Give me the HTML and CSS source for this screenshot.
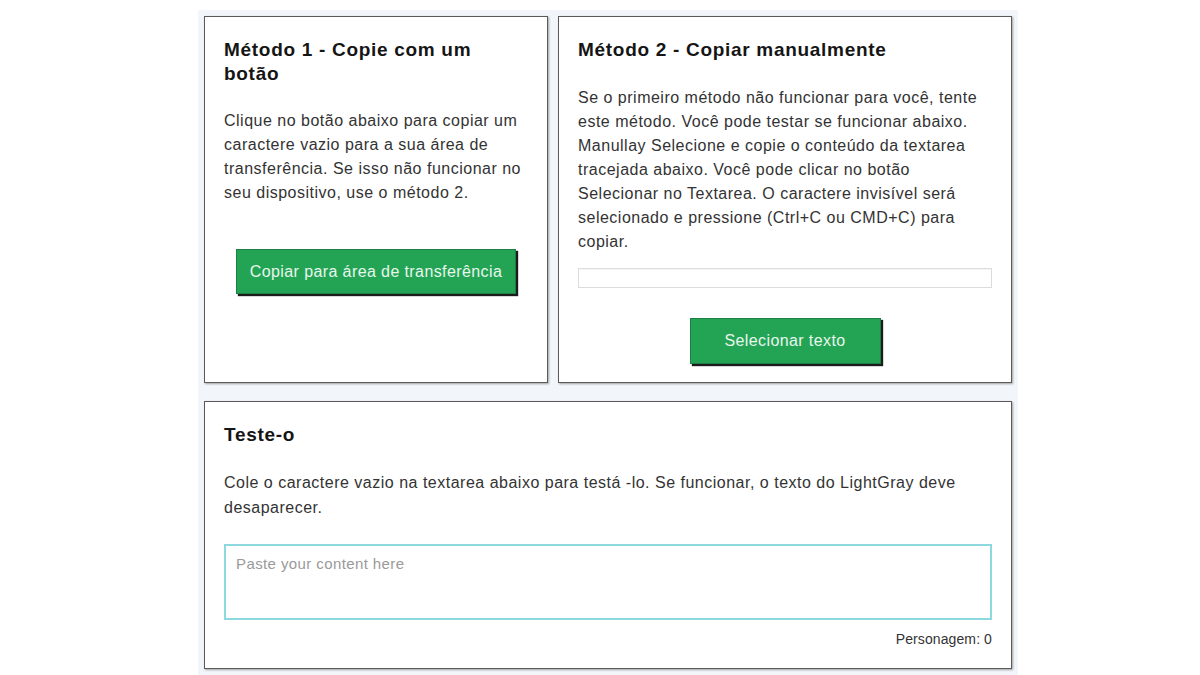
FILE: index.html
```html
<!DOCTYPE html>
<html lang="pt">
<head>
<meta charset="utf-8">
<title>Caractere vazio</title>
<link rel="stylesheet" href="styles.css">
</head>
<body>
<div class="page">
  <section class="card card-m1">
    <h2 class="card-title">Método 1 - Copie com um botão</h2>
    <p class="card-text">Clique no botão abaixo para copiar um caractere vazio para a sua área de transferência. Se isso não funcionar no seu dispositivo, use o método 2.</p>
    <div class="btn-row btn-row-m1">
      <button class="btn btn-copy">Copiar para área de transferência</button>
    </div>
  </section>
  <section class="card card-m2">
    <h2 class="card-title">Método 2 - Copiar manualmente</h2>
    <p class="card-text">Se o primeiro método não funcionar para você, tente este método. Você pode testar se funcionar abaixo. Manullay Selecione e copie o conteúdo da textarea tracejada abaixo. Você pode clicar no botão Selecionar no Textarea. O caractere invisível será selecionado e pressione (Ctrl+C ou CMD+C) para copiar.</p>
    <div class="manual-box"></div>
    <div class="btn-row btn-row-m2">
      <button class="btn btn-select">Selecionar texto</button>
    </div>
  </section>
  <section class="card card-test">
    <h2 class="card-title">Teste-o</h2>
    <p class="card-text">Cole o caractere vazio na textarea abaixo para testá -lo. Se funcionar, o texto do LightGray deve desaparecer.</p>
    <textarea class="test-area" placeholder="Paste your content here"></textarea>
    <div class="counter">Personagem: 0</div>
  </section>
</div>
</body>
</html>
```

FILE: styles.css
```css
html, body {
  margin: 0;
  padding: 0;
  background: #ffffff;
  font-family: "Liberation Sans", Arial, sans-serif;
}

.page {
  margin: 10px 0 0 198px;
  width: 808px;
  padding: 6px 6px 7px 6px;
  background: #f2f5fa;
  display: grid;
  grid-template-columns: 344px 454px;
  column-gap: 10px;
  row-gap: 18px;
}

.card {
  background: #ffffff;
  border: 1px solid #5a5a5a;
  box-shadow: 1px 1px 2px rgba(0, 0, 0, 0.35);
  padding: 21px 19px 18px 19px;
  display: flex;
  flex-direction: column;
}

.card-test {
  grid-column: 1 / 3;
  padding-bottom: 20px;
}

.card-title {
  margin: 0;
  font-size: 19px;
  letter-spacing: 0.7px;
  line-height: 24px;
  font-weight: bold;
  color: #151515;
}

.card-text {
  margin: 23px 0 0 0;
  font-size: 16px;
  letter-spacing: 0.5px;
  line-height: 24px;
  color: #333333;
}

.card-m2 .card-text {
  margin-top: 24px;
}

.card-test .card-text {
  line-height: 25px;
}

.btn-row {
  display: flex;
  justify-content: center;
}

.btn-row-m1 {
  margin-top: 44px;
}

.btn-row-m2 {
  margin-top: 30px;
}

.btn {
  font-family: "Liberation Sans", Arial, sans-serif;
  font-size: 16px;
  letter-spacing: 0.4px;
  color: #e8f6ec;
  background: #23a455;
  border: 1px solid #1d7f43;
  box-shadow: 2px 2px 1px #1c1c1c;
  padding: 0;
  cursor: pointer;
}

.btn-copy {
  width: 280px;
  height: 45px;
}

.btn-select {
  width: 191px;
  height: 46px;
}

.manual-box {
  margin-top: 14px;
  height: 18px;
  border: 1px solid #dcdcdc;
  box-shadow: inset 0 1px 1px rgba(0, 0, 0, 0.04);
}

.test-area {
  margin-top: 24px;
  display: block;
  box-sizing: border-box;
  width: 100%;
  height: 76px;
  border: 2px solid #8ed9dd;
  padding: 9px 10px;
  font-family: "Liberation Sans", Arial, sans-serif;
  font-size: 15px;
  letter-spacing: 0.4px;
  line-height: 18px;
  color: #333;
  resize: none;
  outline: none;
}

.test-area::placeholder {
  color: #9a9a9a;
}

.counter {
  margin-top: 10px;
  text-align: right;
  font-size: 14px;
  letter-spacing: 0.1px;
  line-height: 18px;
  color: #333333;
}
```
